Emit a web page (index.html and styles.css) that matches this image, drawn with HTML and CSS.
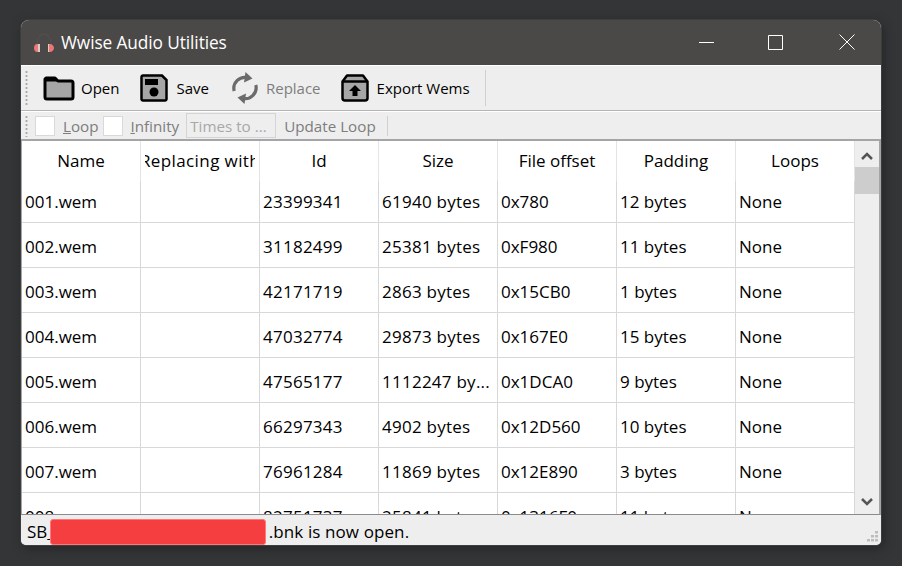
FILE: index.html
```html
<!DOCTYPE html>
<html lang="en">
<head>
<meta charset="utf-8">
<title>Wwise Audio Utilities</title>
<link rel="stylesheet" href="styles.css">
</head>
<body>
<div class="window">
  <header class="titlebar">
    <svg class="app-icon" width="22" height="21" viewBox="0 0 22 21"><path d="M5 12C5 5 8 1 12 1s7 4 7 11" fill="none" stroke="#504e4c" stroke-width="1.500"/><path d="M6 11H5C3 11 2 13 2 15s1 4 3 4h1z" fill="#ee7578"/><path d="M6 11h2v8H6z" fill="#d2cfcc"/><path d="M17 11h1c2 0 4 2 4 4s-2 4-4 4h-1z" fill="#ee7578"/><path d="M16 11h1v8h-1z" fill="#d2cfcc"/></svg>
    <span class="title">Wwise Audio Utilities</span>
    <div class="controls">
      <button class="ctl shifted" aria-label="Minimize"><svg width="16" height="16" viewBox="0 0 16 16"><path d="M0 8.500h15" stroke="#fff" fill="none"/></svg></button>
      <button class="ctl" aria-label="Maximize"><svg width="16" height="16" viewBox="0 0 16 16"><path d="M.5 1.500h14v14H.5z" stroke="#fff" fill="none"/></svg></button>
      <button class="ctl shifted" aria-label="Close"><svg width="16" height="16" viewBox="0 0 16 16"><path d="M.5 .5l15 15M15.500 .5l-15 15" stroke="#fff" fill="none"/></svg></button>
    </div>
  </header>

  <div class="toolbar main-bar">
    <span class="grip"></span>
    <button class="tool open">
      <svg width="32" height="26" viewBox="0 0 32 26"><path d="M3 3h9l3 3h13a2 2 0 0 1 2 2v14a2 2 0 0 1-2 2H4a2 2 0 0 1-2-2V4z" fill="#a6a6a6" stroke="#000" stroke-width="3" stroke-linejoin="round"/><path d="M2 2h10l3 4.500H2z" fill="#000"/></svg>
      <span>Open</span>
    </button>
    <button class="tool save">
      <svg width="28" height="28" viewBox="0 0 28 28"><path d="M3 1.500h19l4.500 4.500v19a1.500 1.500 0 0 1-1.500 1.500H3A1.500 1.500 0 0 1 1.500 25V3A1.500 1.500 0 0 1 3 1.500z" fill="#a6a6a6" stroke="#000" stroke-width="2.500"/><rect x="5" y="5" width="13" height="6" fill="#000"/><circle cx="14" cy="18" r="4.500" fill="#000"/></svg>
      <span>Save</span>
    </button>
    <button class="tool disabled">
      <svg width="28" height="32" viewBox="0 0 28 32"><path d="M3.200 19A11 11 0 0 1 17 5.800" fill="none" stroke="#6b6b6b" stroke-width="3.200"/><path d="M14.500 0l7 6.500-8.500 4z" fill="#6b6b6b"/><path d="M24.800 13A11 11 0 0 1 11 26.200" fill="none" stroke="#6b6b6b" stroke-width="3.200"/><path d="M13.500 32l-7-6.500 8.500-4z" fill="#6b6b6b"/></svg>
      <span>Replace</span>
    </button>
    <button class="tool">
      <svg width="28" height="28" viewBox="0 0 28 28"><path d="M6 1.500h16l4.500 6V24a2.500 2.500 0 0 1-2.500 2.500H4A2.500 2.500 0 0 1 1.500 24V7.500z" fill="#a6a6a6" stroke="#000" stroke-width="2.500" stroke-linejoin="round"/><path d="M2 7.500h24" stroke="#000" stroke-width="2.500"/><path d="M14 11l6 6h-3.500v5h-5v-5H8z" fill="#000"/></svg>
      <span>Export Wems</span>
    </button>
    <span class="sep"></span>
  </div>

  <div class="toolbar loop-bar">
    <span class="grip small"></span>
    <span class="check"></span>
    <span class="lbl loop"><u>L</u>oop</span>
    <span class="check"></span>
    <span class="lbl infinity"><u>I</u>nfinity</span>
    <input class="times" placeholder="Times to ..." disabled>
    <span class="lbl update">Update Loop</span>
    <span class="sep"></span>
  </div>

  <div class="table-wrap">
    <div class="table">
      <div class="head">
        <span>Name</span><span><span class="clip">Replacing with</span></span><span>Id</span><span>Size</span><span>File offset</span><span>Padding</span><span>Loops</span>
      </div>
      <div class="rows">
        <div class="row"><span>001.wem</span><span></span><span>23399341</span><span>61940 bytes</span><span>0x780</span><span>12 bytes</span><span>None</span></div>
        <div class="row"><span>002.wem</span><span></span><span>31182499</span><span>25381 bytes</span><span>0xF980</span><span>11 bytes</span><span>None</span></div>
        <div class="row"><span>003.wem</span><span></span><span>42171719</span><span>2863 bytes</span><span>0x15CB0</span><span>1 bytes</span><span>None</span></div>
        <div class="row"><span>004.wem</span><span></span><span>47032774</span><span>29873 bytes</span><span>0x167E0</span><span>15 bytes</span><span>None</span></div>
        <div class="row"><span>005.wem</span><span></span><span>47565177</span><span>1112247 by...</span><span>0x1DCA0</span><span>9 bytes</span><span>None</span></div>
        <div class="row"><span>006.wem</span><span></span><span>66297343</span><span>4902 bytes</span><span>0x12D560</span><span>10 bytes</span><span>None</span></div>
        <div class="row"><span>007.wem</span><span></span><span>76961284</span><span>11869 bytes</span><span>0x12E890</span><span>3 bytes</span><span>None</span></div>
        <div class="row"><span>008.wem</span><span></span><span>82751737</span><span>25841 bytes</span><span>0x1316F0</span><span>11 bytes</span><span>None</span></div>
      </div>
    </div>
    <div class="scrollbar">
      <svg class="arrow" width="14" height="10" viewBox="0 0 14 10"><path d="M2 8l5-5 5 5" fill="none" stroke="#555" stroke-width="2.500"/></svg>
      <div class="thumb"></div>
      <div class="track"></div>
      <svg class="arrow" width="14" height="10" viewBox="0 0 14 10"><path d="M2 2l5 5 5-5" fill="none" stroke="#555" stroke-width="2.500"/></svg>
    </div>
  </div>

  <footer class="status">
    <span>SB_</span><span class="redact"></span><span class="msg">.bnk is now open.</span>
    <svg class="size-grip" width="12" height="12" viewBox="0 0 12 12" fill="#bdbdbd"><rect x="8" y="0" width="3" height="2.500"/><rect x="4" y="4" width="3" height="2.500"/><rect x="8" y="4" width="3" height="2.500"/><rect x="0" y="8" width="3" height="2.500"/><rect x="4" y="8" width="3" height="2.500"/><rect x="8" y="8" width="3" height="2.500"/></svg>
  </footer>
</div>
</body>
</html>
```

FILE: styles.css
```css
* { box-sizing: border-box; }
html, body { height: 100%; }
body {
  margin: 0;
  padding: 20px 21px;
  background: #333537;
  font-family: "Open Sans", "Noto Sans", sans-serif;
  font-size: 17px;
  color: #000;
  overflow: hidden;
}
button, input { font: inherit; }
.window {
  width: 860px;
  height: 525px;
  display: flex;
  flex-direction: column;
  background: #eeeeee;
  border-radius: 8px 8px 5px 5px;
  overflow: hidden;
  box-shadow: 0 0 0 1px #3d3d3d, 2px 3px 12px rgba(0, 0, 0, .35);
}
.titlebar {
  flex: 0 0 45px;
  display: flex;
  align-items: center;
  background: #4b4947;
  color: #fff;
  padding-left: 11px;
}
.app-icon { margin: 1px 7px 0 0; flex: none; }
.title { font-size: 17.300px; letter-spacing: -.1px; }
.controls { margin-left: auto; display: flex; align-self: stretch; }
.ctl {
  width: 70px;
  border: 0;
  background: none;
  padding: 0 0 1px;
  display: flex;
  align-items: center;
  justify-content: center;
}
.ctl.shifted { padding-left: 2px; }
.toolbar {
  display: flex;
  align-items: center;
  background: #eeeeee;
  flex: none;
}
.main-bar { height: 46px; border-top: 1px solid #fff; border-bottom: 1px solid #b5b5b5; padding-left: 4px; }
.loop-bar { height: 30px; padding-left: 4px; border-top: 1px solid #fff; border-bottom: 2px solid #a5a5a8; }
.grip {
  width: 3px;
  height: 36px;
  margin-right: 15px;
  background: radial-gradient(circle, #a8a8a8 1px, transparent 1.200px) 0 0 / 3px 4px;
}
.grip.small { height: 22px; margin-right: 7px; }
.tool {
  display: flex;
  align-items: center;
  gap: 8px;
  border: 0;
  background: none;
  padding: 0;
  margin-right: 21px;
  font-size: 15px;
  color: #000;
}
.tool.open { gap: 6px; }
.tool.save { margin-right: 22px; }
.tool.disabled { color: #7d7d7d; gap: 7px; margin-right: 20px; }
.sep { width: 1px; height: 36px; background: #d0d0d0; margin-left: -6px; }
.loop-bar .sep { height: 20px; margin-left: 11px; }
.check { width: 20px; height: 20px; background: #fff; border: 1px solid #d9d9d9; flex: none; }
.lbl { color: #7d7d7d; font-size: 15.200px; margin: 0 5px 0 8px; }
.lbl.loop { margin-right: 4px; }
.lbl.infinity { margin-right: 7px; }
.lbl u { text-decoration-thickness: 1px; }
.times {
  width: 90px;
  height: 25px;
  padding: 0 3px;
  margin: 0;
  background: #eeeeee;
  border: 1px solid #d4d4d4;
  font-size: 15.200px;
}
.times::placeholder { color: #a8a8a8; opacity: 1; }
.lbl.update { margin: 0 0 0 8px; }
.table-wrap {
  flex: 1;
  min-height: 0;
  display: flex;
  background: #fff;
  border-left: 1px solid #a5a5a8;
  border-right: 2px solid #a5a5a8;
  border-bottom: 1px solid #8a8a90;
}
.table { flex: 1; min-width: 0; overflow: hidden; display: flex; flex-direction: column; }
.head, .row {
  display: grid;
  grid-template-columns: repeat(7, 119px);
}
.head span, .row span {
  border-right: 1px solid #d8d8d8;
  overflow: hidden;
  white-space: nowrap;
}
.head { height: 40px; flex: none; }
.head > span {
  display: flex;
  align-items: center;
  justify-content: center;
  padding-bottom: 2px;
  border-right-color: #e4e4e4;
}
.head .clip {
  border: 0;
  width: 110px;
  flex: none;
  display: flex;
  justify-content: center;
  letter-spacing: .4px;
}
.rows { flex: 1; min-height: 0; overflow: hidden; }
.row { height: 45px; border-bottom: 1px solid #d8d8d8; }
.row:first-child { margin-top: -3px; }
.row span { padding: 0 3px; line-height: 48px; }
.row span:nth-child(3), .row span:nth-child(4) { letter-spacing: .25px; }
.scrollbar {
  flex: 0 0 24px;
  background: #eeeeee;
  display: flex;
  flex-direction: column;
  align-items: center;
  padding-top: 10px;
  padding-bottom: 7px;
}
.arrow { flex: none; }
.thumb { width: 24px; height: 27px; background: #cdcdcd; margin-top: 6px; flex: none; }
.track { flex: 1; }
.status {
  flex: 0 0 30px;
  position: relative;
  display: flex;
  align-items: center;
  padding: 3px 0 0 6px;
  font-size: 17px;
  background: #eeeeee;
}
.redact {
  width: 216px;
  height: 26px;
  align-self: flex-end;
  background: #f53e3f;
  border-radius: 3px;
  border: 1px solid #f77;
  margin-left: -5px;
}
.msg { margin-left: 3px; letter-spacing: .1px; }
.size-grip { position: absolute; right: 2px; bottom: 2px; }
```
